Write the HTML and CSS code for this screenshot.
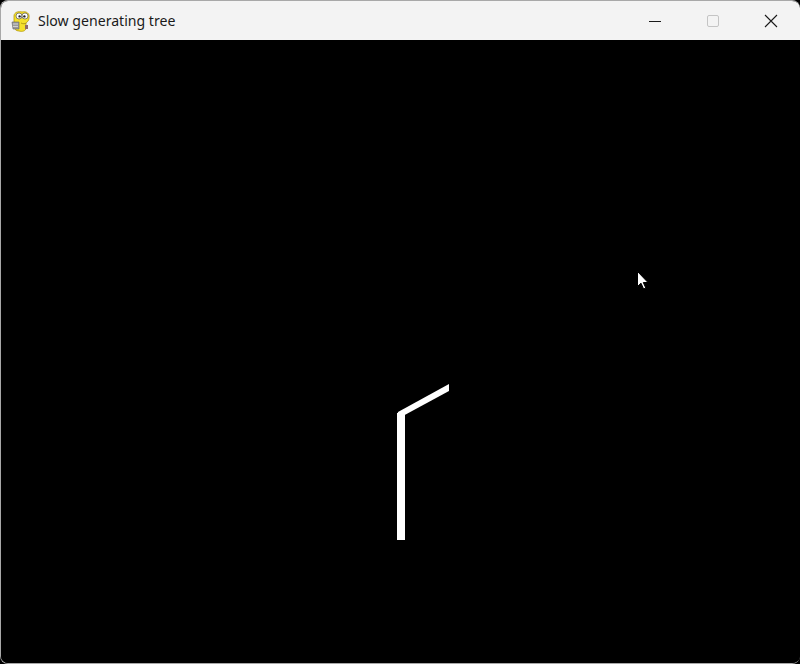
FILE: index.html
```html
<!DOCTYPE html>
<html>
<head>
<meta charset="utf-8">
<title>Slow generating tree</title>
<link rel="stylesheet" href="styles.css">
</head>
<body>
<div class="window">
  <div class="titlebar">
    <svg class="app-icon" width="20" height="22" viewBox="0 0 20 22">
      <path d="M3 6 C3 2 8 1 11 2 C15 1 19 3 18 8 C18 11 16 12 15 13 L15 18 C15 21 11 22 8 21 C5 21 3 19 3 16 Z" fill="#f5e12a" stroke="#b59b10" stroke-width="0.8"/>
      <ellipse cx="8" cy="6" rx="3" ry="3" fill="#fff" stroke="#555" stroke-width="0.7"/>
      <ellipse cx="14" cy="6" rx="3" ry="3" fill="#fff" stroke="#555" stroke-width="0.7"/>
      <circle cx="8.6" cy="6.4" r="1.2" fill="#222"/>
      <circle cx="13.4" cy="6.4" r="1.2" fill="#222"/>
      <path d="M1 12 L8 12 L8 19 L2 19 Z" fill="#9a9a9a" stroke="#666" stroke-width="0.6"/>
      <path d="M2 14 L7 14 M2 16.5 L7 16.5" stroke="#e0e0e0" stroke-width="0.8"/>
      <path d="M10 13 C12 14 14 14 15 13" stroke="#a08a10" stroke-width="0.8" fill="none"/>
      <path d="M14 15 L17 15 L17 19 L14 19 Z" fill="#8e6a6a"/>
    </svg>
    <span class="title">Slow generating tree</span>
    <div class="controls">
      <div class="ctl">
        <svg width="14" height="14" viewBox="0 0 14 14"><line x1="1" y1="7.5" x2="13" y2="7.5" stroke="#1a1a1a" stroke-width="1"/></svg>
      </div>
      <div class="ctl">
        <svg width="14" height="14" viewBox="0 0 14 14"><rect x="1.5" y="1.5" width="11" height="11" rx="1.5" fill="none" stroke="#c4c4c4" stroke-width="1"/></svg>
      </div>
      <div class="ctl">
        <svg width="14" height="14" viewBox="0 0 14 14"><path d="M1 1 L13 13 M13 1 L1 13" stroke="#1a1a1a" stroke-width="1.1"/></svg>
      </div>
    </div>
  </div>
  <div class="canvas">
    <svg class="drawing" width="799" height="623" viewBox="1 40 799 623">
      <rect x="397" y="413" width="8" height="127" fill="#fff"/>
      <polygon points="398,412 449,384 449,391 401,417 397,417" fill="#fff"/>
    </svg>
    <svg class="cursor" width="14" height="20" viewBox="0 0 14 20">
      <path d="M0.5 0.5 L0.5 15.5 L4 12.2 L6.6 18 L8.8 17 L6.3 11.5 L11 11.5 Z" fill="#fff" stroke="#000" stroke-width="1"/>
    </svg>
  </div>
</div>
</body>
</html>
```
FILE: styles.css
```css
html, body {
  margin: 0;
  padding: 0;
  background: #000;
}
body {
  width: 800px;
  height: 664px;
  overflow: hidden;
}
.window {
  width: 800px;
  height: 664px;
  box-sizing: border-box;
  border: 1px solid #a8a8a8;
  border-right: none;
  border-radius: 8px 8px 8px 8px;
  overflow: hidden;
  display: flex;
  flex-direction: column;
  background: #000;
}
.titlebar {
  height: 39px;
  flex: none;
  background: #f3f3f3;
  display: flex;
  align-items: center;
  font-family: "Segoe UI", "Noto Sans", "Open Sans", sans-serif;
}
.app-icon {
  margin-left: 10px;
  margin-right: 7px;
  flex: none;
}
.title {
  font-size: 14.1px;
  color: #1a1a1a;
  margin-top: -1px;
}
.controls {
  margin-left: auto;
  display: flex;
  height: 100%;
}
.ctl {
  width: 58px;
  height: 100%;
  display: flex;
  align-items: center;
  justify-content: center;
}
.canvas {
  flex: 1;
  position: relative;
  background: #000;
}
.drawing {
  display: block;
}
.cursor {
  position: absolute;
  left: 636px;
  top: 231px;
}
```
